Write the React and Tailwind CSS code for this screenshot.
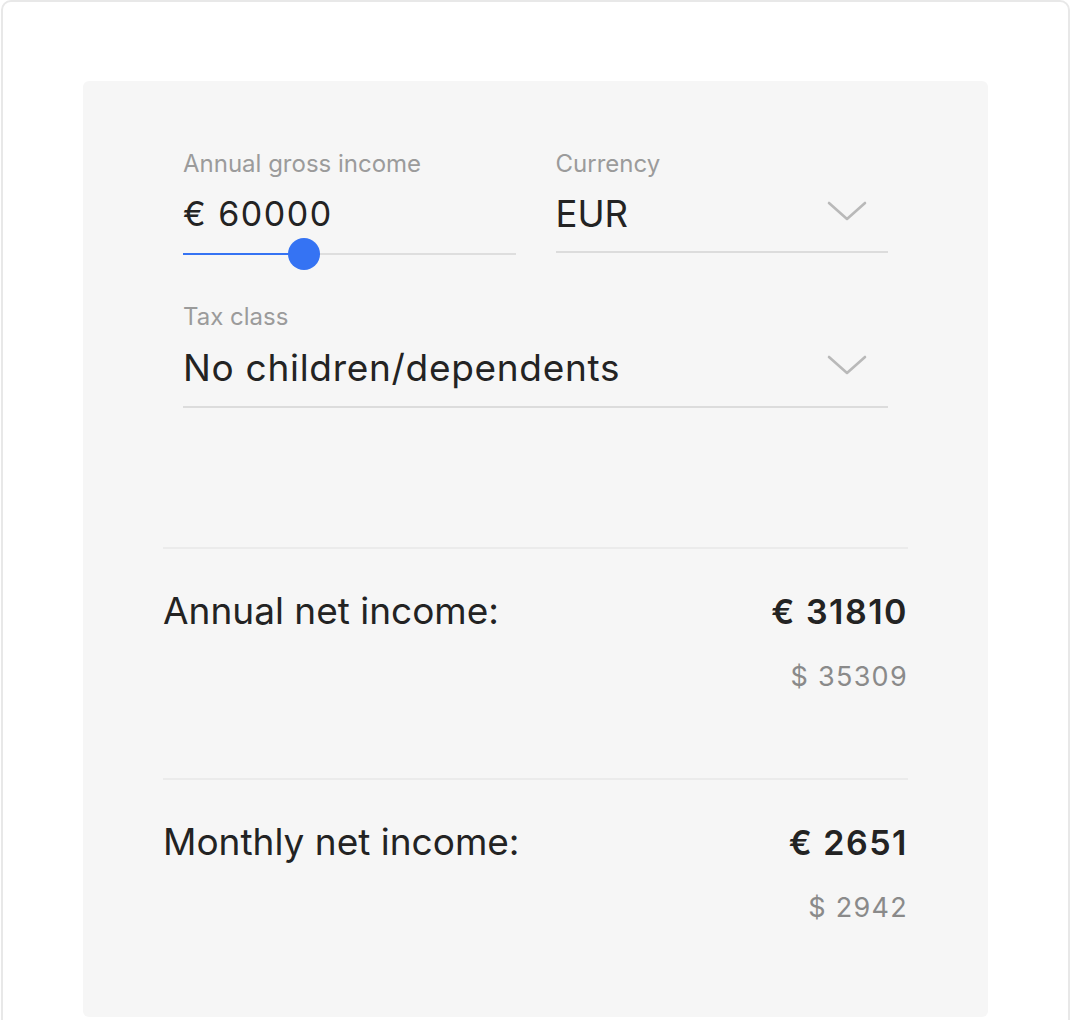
import React from "react";

function Chevron() {
  return (
    <svg width="40" height="22" viewBox="0 0 40 22" fill="none" className="mr-[21px] mb-[6px] shrink-0">
      <path d="M2 3 L20 19 L38 3" stroke="#b9b9b9" strokeWidth="2.6" strokeLinecap="round" strokeLinejoin="round" />
    </svg>
  );
}

function Label({ children }) {
  return <div className="text-[24px] leading-[28px] text-[#9b9b9b]">{children}</div>;
}

function ResultRow({ label, value, sub }) {
  return (
    <div className="flex flex-col">
      <div className="h-[2px] bg-[#ebebeb]" />
      <div className="mt-[40px] flex items-baseline justify-between">
        <span className="text-[37px] leading-[44px] text-[#232323]">{label}</span>
        <span className="text-[34px] leading-[44px] font-semibold tracking-[1.5px] text-[#232323]">{value}</span>
      </div>
      <div className="mt-[28px] text-right text-[27px] leading-[30px] tracking-[1.3px] text-[#8a8a8a]">{sub}</div>
    </div>
  );
}

export default function App() {
  return (
    <div className="min-h-screen bg-white" style={{ fontFamily: "Inter, 'Noto Sans', sans-serif" }}>
      <div className="ml-[1px] w-[1069px] rounded-[10px] border-2 border-[#e8e8e8] px-[80px] pt-[79px] pb-[80px]">
        <div className="h-[936px] rounded-[6px] bg-[#f6f6f6] pt-[69px]">
          <div className="px-[100px]">
            <div className="grid grid-cols-2 gap-x-[40px]">
              <div className="flex flex-col">
                <Label>Annual gross income</Label>
                <div className="mt-[14px] flex h-[44px] items-center text-[34px] leading-[44px] tracking-[1.5px] text-[#232323]">€ 60000</div>
                <div className="relative mt-[2px] h-[32px]">
                  <div className="absolute left-0 right-0 top-[15px] h-[2px] bg-[#dedede]" />
                  <div className="absolute left-0 top-[15px] h-[2px] w-[121px] bg-[#3573f3]" />
                  <div className="absolute left-[105px] top-0 h-[32px] w-[32px] rounded-full bg-[#3573f3]" />
                </div>
              </div>
              <div className="flex flex-col">
                <Label>Currency</Label>
                <div className="mt-[14px] flex h-[44px] items-center justify-between">
                  <span className="text-[36.5px] leading-[44px] text-[#232323]">EUR</span>
                  <Chevron />
                </div>
                <div className="mt-[15px] h-[2px] bg-[#dcdcdc]" />
              </div>
            </div>
            <div className="mt-[33px] flex flex-col">
              <Label>Tax class</Label>
              <div className="mt-[15px] flex h-[44px] items-center justify-between">
                <span className="text-[37px] leading-[44px] tracking-[0.7px] text-[#232323]">No children/dependents</span>
                <Chevron />
              </div>
              <div className="mt-[16px] h-[2px] bg-[#dcdcdc]" />
            </div>
          </div>
          <div className="mt-[139px] flex flex-col gap-[86px] px-[80px]">
            <ResultRow label="Annual net income:" value="€ 31810" sub="$ 35309" />
            <ResultRow label="Monthly net income:" value="€ 2651" sub="$ 2942" />
          </div>
        </div>
      </div>
    </div>
  );
}
